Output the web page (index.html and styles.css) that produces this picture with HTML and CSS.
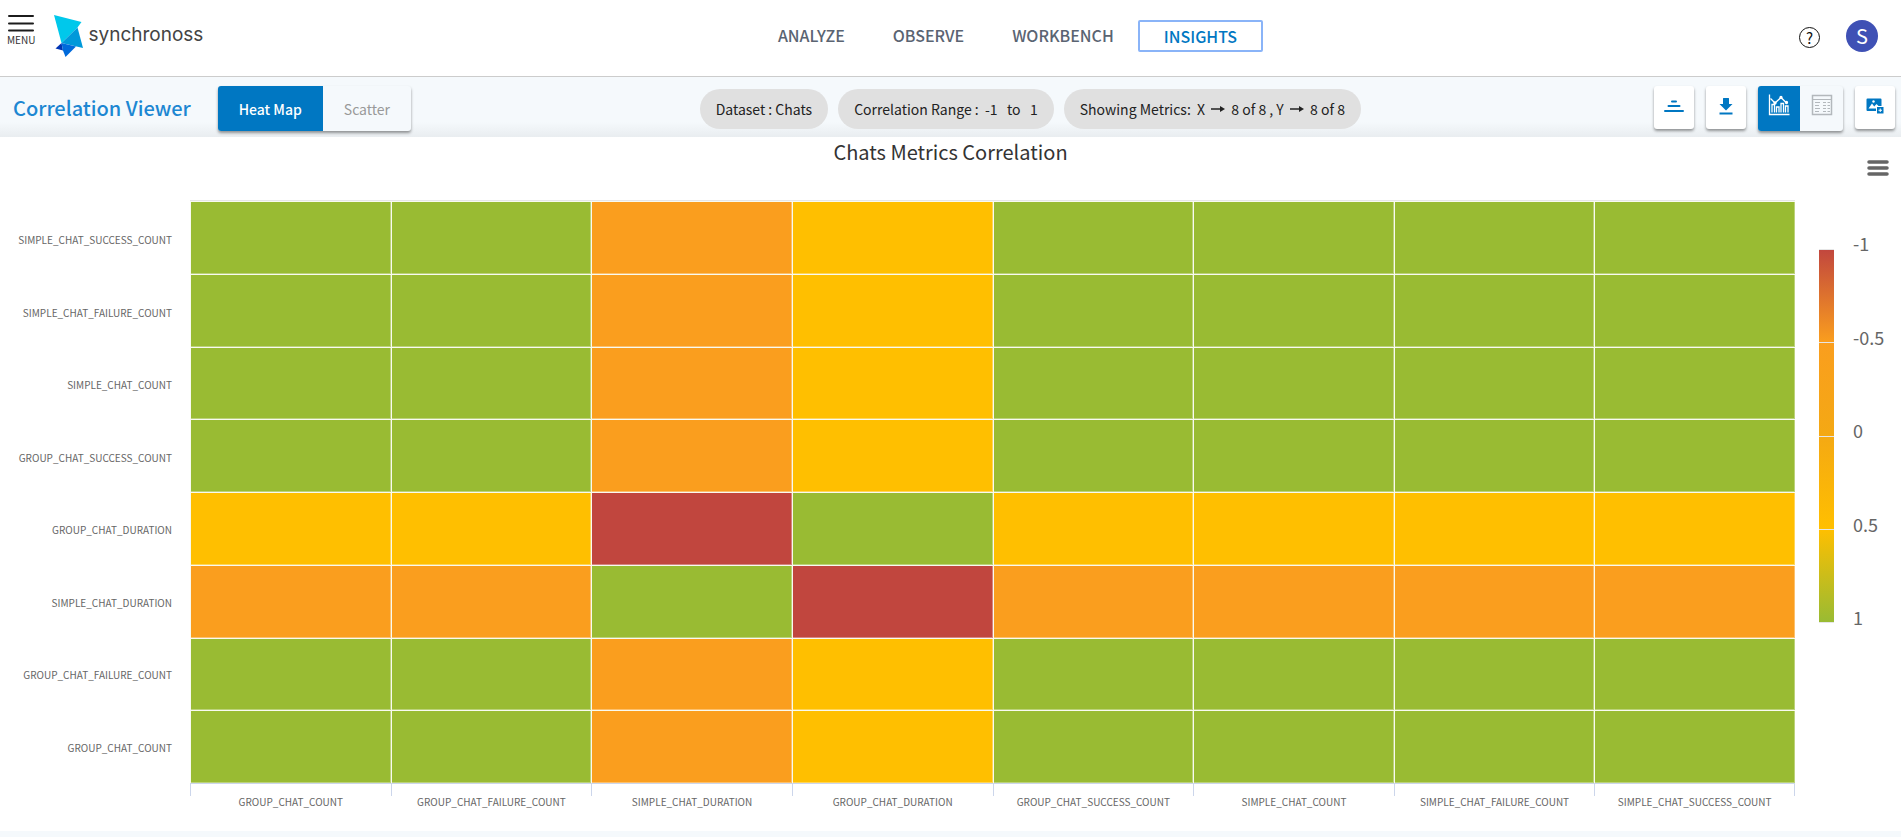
FILE: index.html
```html
<!DOCTYPE html>
<html lang="en">
<head>
<meta charset="utf-8">
<title>Correlation Viewer</title>
<link rel="stylesheet" href="styles.css">
</head>
<body>
<header class="topbar">
  <div class="brand">
    <button class="menu" type="button">
      <svg width="26" height="18" viewBox="0 0 26 18" aria-hidden="true"><path d="M1 2h24M1 9.500h24M1 16.500h24" stroke="#1c1c1c" stroke-width="2" stroke-linecap="round"/></svg>
      <span>MENU</span>
    </button>
    <a class="logo" href="#">
      <svg width="30" height="43" viewBox="0 0 30 43" aria-hidden="true">
        <path d="M0 0 27.500 7 23.500 12.500 7.500 28Z" fill="#00c8eb"/>
        <path d="M23.500 12.500 29 33 7.500 28Z" fill="#0099da"/>
        <path d="M7.500 28 1.500 33.500 9 35.500Z" fill="#0035b4"/>
        <path d="M7.500 28 22 31.500 11.500 42 9 35.500Z" fill="#006adb"/>
      </svg>
      <span class="logo-name">synchronoss</span>
    </a>
  </div>
  <nav class="nav">
    <a href="#">ANALYZE</a>
    <a href="#">OBSERVE</a>
    <a href="#">WORKBENCH</a>
    <a href="#" class="current">INSIGHTS</a>
  </nav>
  <div class="account">
    <button class="help" type="button" aria-label="Help">?</button>
    <button class="avatar" type="button">S</button>
  </div>
</header>

<section class="toolbar">
  <div class="toolbar-left">
    <h1>Correlation Viewer</h1>
    <div class="toggle">
      <button type="button" class="on">Heat Map</button>
      <button type="button">Scatter</button>
    </div>
  </div>
  <div class="chips">
    <span class="chip">Dataset : Chats</span>
    <span class="chip">Correlation Range :&nbsp; -1 &nbsp; to &nbsp; 1</span>
    <span class="chip">Showing Metrics:&nbsp; X <svg width="14" height="8" viewBox="0 0 14 8" role="img" aria-label="to"><path d="M0 4h10" stroke="#222" stroke-width="1.500"/><path d="M9 1 14 4 9 7Z" fill="#222"/></svg> 8 of 8 , Y <svg width="14" height="8" viewBox="0 0 14 8" role="img" aria-label="to"><path d="M0 4h10" stroke="#222" stroke-width="1.500"/><path d="M9 1 14 4 9 7Z" fill="#222"/></svg> 8 of 8</span>
  </div>
  <div class="tools">
    <button class="tool" type="button" aria-label="Sort"><svg width="20" height="14" viewBox="0 0 20 14"><path d="M8 2.500h4M4.500 7h11M1 12h18" stroke="#0077c2" stroke-width="2" stroke-linecap="round"/></svg></button>
    <button class="tool" type="button" aria-label="Download"><svg width="14" height="18" viewBox="0 0 14 18"><path d="M4 1.500Q4 1 4.500 1h5q.5 0 .5.5V7h3.500L7 13.500.5 7H4Z" fill="#0077c2"/><path d="M.5 16.500h13" stroke="#0077c2" stroke-width="2"/></svg></button>
    <div class="toggle view">
      <button type="button" class="on" aria-label="Chart view"><svg width="22" height="22" viewBox="0 0 22 22" fill="none" stroke="#fff" stroke-width="1.300"><path d="M1.500.5v20h20"/><path d="M2.500 4.500 7 9l6-5.500 5 5"/><path d="M4 18.500v-8h2.500v8M8.500 18.500V13H11v5.500M13 18.500v-9h2.500v9M17.500 18.500V12H20v6.500"/><circle cx="7" cy="9" r="1" fill="#fff"/><circle cx="13" cy="3.500" r="1" fill="#fff"/><circle cx="18.500" cy="8.500" r="1" fill="#fff"/></svg></button>
      <button type="button" aria-label="Table view"><svg width="22" height="22" viewBox="0 0 22 22" fill="none" stroke="#b3b8bc"><path d="M1.500 1.500h19v19h-19Z" stroke-width="1.500"/><path d="M1.500 5.500h19"/><path d="M4 8.500h5M4 11.500h4M4 14.500h5M4 17.500h4M12 8.500h3M12 11.500h3M12 14.500h3M12 17.500h3M16.500 8.500h2.500M16.500 11.500h2.500M16.500 14.500h2.500M16.500 17.500h2.500"/></svg></button>
    </div>
    <button class="tool" type="button" aria-label="Add to dashboard"><svg width="18" height="16" viewBox="0 0 18 16"><path d="M1.500.5h13q1 0 1 1V8H10v5H1.500q-1 0-1-1V1.500q0-1 1-1Z" fill="#0077c2"/><path d="M2.500 10.500 6 5.500l2.200 3L10.500 6l2 2H10v2.500Z" fill="#fff"/><circle cx="7.500" cy="3.500" r="1.200" fill="#fff"/><path d="M11 9h6.500v6.500H11Z" fill="#0077c2"/><path d="M14.250 10.500v3.500M12.500 12.250H16" stroke="#fff"/></svg></button>
  </div>
</section>

<main class="card">
  <h2>Chats Metrics Correlation</h2>
  <button class="chart-menu" type="button" aria-label="Chart menu"><svg width="22" height="18" viewBox="0 0 22 18"><path d="M2 3h18M2 9h18M2 15h18" stroke="#666" stroke-width="3.500" stroke-linecap="round"/></svg></button>
  <div class="chart">
    <div class="y-axis" id="y"></div>
    <div class="plot" id="plot"></div>
    <div class="x-axis" id="x"></div>
    <div class="legend">
      <div class="scale"><i></i><i></i><i></i><i></i></div>
      <div class="scale-labels"><span>-1</span><span>-0.5</span><span>0</span><span>0.5</span><span>1</span></div>
    </div>
  </div>
</main>
<script src="chart.js"></script>
</body>
</html>
```

FILE: styles.css
```css
* { box-sizing: border-box; }
body {
  margin: 0;
  min-height: 100vh;
  padding-bottom: 2px;
  display: flex;
  flex-direction: column;
  background: #fff;
  color: #333;
  font-family: "Noto Sans CJK SC", "Noto Sans", sans-serif;
}
h1, h2 { margin: 0; }
button { border: 0; padding: 0; background: none; font: inherit; color: inherit; }
a { color: inherit; text-decoration: none; }
svg { display: block; }

.topbar {
  height: 77px;
  flex: none;
  display: grid;
  grid-template-columns: 13fr auto 11fr;
  border-bottom: 1px solid #ccc;
}
.brand { display: flex; align-items: flex-start; padding: 14px 0 0 7px; gap: 19px; }
.menu { display: flex; flex-direction: column; align-items: center; font-size: 10px; line-height: 16px; }
.logo { display: flex; gap: 4px; padding-top: 1px; color: #444; }
.logo-name { font: 19px/40px Inter, sans-serif; }
.nav { display: flex; align-items: flex-start; padding-top: 20px; font-size: 16px; font-weight: 500; line-height: 30px; color: #5a6472; }
.nav a { padding: 0 24px; }
.nav .current { border: 2px solid #8ab4f8; border-radius: 2px; color: #0077c2; line-height: 28px; }
.account { display: flex; justify-content: flex-end; align-items: flex-start; gap: 26px; padding: 20px 23px 0 0; }
.help { width: 21px; height: 21px; margin-top: 7px; border: 1px solid #111; border-radius: 50%; font-size: 15px; line-height: 18px; color: #111; }
.avatar { width: 32px; height: 32px; border-radius: 50%; background: #3f51b5; color: #fff; font-size: 20px; line-height: 30px; }

.toolbar {
  height: 60px;
  flex: none;
  display: grid;
  grid-template-columns: 9fr auto 7fr;
  align-items: start;
  padding: 9px 6px 0 13px;
  background: linear-gradient(#f5f9fc 75%, #e9edf0);
}
.toolbar-left { display: flex; gap: 27px; }
h1 { font-size: 20px; font-weight: 500; line-height: 44px; color: #1d87d2; }
.toggle { display: flex; height: 45px; border-radius: 3px; overflow: hidden; box-shadow: 0 2px 3px rgba(0,0,0,.4); background: #f5f9fc; }
.toggle button { padding: 0 21px; font-size: 14px; color: #999; }
.toggle .on { background: #0077c2; color: #fff; font-weight: 500; }
.chips { display: flex; gap: 10px; padding-top: 3px; }
.chip { display: flex; align-items: center; gap: 3px; height: 40px; padding: 0 16px; border-radius: 20px; background: #e0e0e0; font-size: 14px; color: #222; white-space: pre; }
.tools { display: flex; justify-content: flex-end; gap: 12px; }
.tool { width: 40px; height: 43px; padding-bottom: 4px; display: grid; place-items: center; border-radius: 3px; background: #fff; box-shadow: 0 2px 3px rgba(0,0,0,.4); }
.view button { width: 43px; padding: 0 0 8px; display: grid; place-items: center; }
.view .on { width: 42px; }

.card {
  position: relative;
  flex: 1;
  display: flex;
  flex-direction: column;
  border-bottom: 6px solid #f5f9fc;
  border-radius: 4px 4px 0 0;
  background: #fff;
}
h2 { font-size: 20px; font-weight: 400; line-height: 30px; text-align: center; color: #333; }
.chart-menu { position: absolute; right: 12px; top: 22px; }
.chart {
  flex: 1;
  display: grid;
  grid-template-columns: 190px 1fr 106px;
  grid-template-rows: 1fr 47px;
  padding-top: 33px;
}
.y-axis { display: grid; grid-template-rows: repeat(8, 1fr); align-items: center; padding: 4px 18px 0 0; text-align: right; font-size: 10px; line-height: 14px; color: #666; }
.plot { display: grid; grid-template: repeat(8, 1fr) / repeat(8, 1fr); gap: 1px; padding: 1px 0 0 1px; background: #f8faf0; border-top: 1px solid #e6e6e6; border-bottom: 1px solid #ccd6eb; }
.plot div { border: solid rgba(255,255,255,.35); border-width: 0 1px 1px 0; background-clip: border-box; }
.good { background: #9b3; }
.mid { background: #ffbf00; }
.low { background: #fa9e1e; }
.bad { background: #c1463e; }
.x-axis { grid-column: 2; display: grid; grid-template-columns: repeat(8, 1fr); text-align: center; font-size: 10px; line-height: 14px; color: #666; }
.x-axis span { height: 12px; padding-top: 11px; border-left: 1px solid #ccd6eb; }
.x-axis span:last-child { border-right: 1px solid #ccd6eb; }
.legend { grid-column: 3; grid-row: 1; display: flex; gap: 19px; padding: 49px 0 0 24px; }
.scale { width: 15px; height: 374px; display: grid; grid-template-rows: repeat(4, 1fr); border-bottom: 1px solid #e6e6e6; background: linear-gradient(#c1463e, #fa9e1e 25%, #f4a814 49%, #ffbf00 75%, #9b3); }
.scale i { border-top: 1px solid #e6e6e6; }
.scale-labels { height: 394px; margin-top: -16px; display: flex; flex-direction: column; justify-content: space-between; font-size: 18px; line-height: 20px; color: #666; }
```

FILE: chart.js
```js
const metrics = [
  "GROUP_CHAT_COUNT", "GROUP_CHAT_FAILURE_COUNT", "SIMPLE_CHAT_DURATION", "GROUP_CHAT_DURATION",
  "GROUP_CHAT_SUCCESS_COUNT", "SIMPLE_CHAT_COUNT", "SIMPLE_CHAT_FAILURE_COUNT", "SIMPLE_CHAT_SUCCESS_COUNT"
];
const rows = [
  "SIMPLE_CHAT_SUCCESS_COUNT", "SIMPLE_CHAT_FAILURE_COUNT", "SIMPLE_CHAT_COUNT", "GROUP_CHAT_SUCCESS_COUNT",
  "GROUP_CHAT_DURATION", "SIMPLE_CHAT_DURATION", "GROUP_CHAT_FAILURE_COUNT", "GROUP_CHAT_COUNT"
];
const S = "SIMPLE_CHAT_DURATION", G = "GROUP_CHAT_DURATION";

function level(a, b) {
  if (a === b) return "good";
  const pair = [a, b];
  if (pair.includes(S) && pair.includes(G)) return "bad";
  if (pair.includes(S)) return "low";
  if (pair.includes(G)) return "mid";
  return "good";
}
function add(parent, tag, text, cls) {
  const el = document.createElement(tag);
  if (text) el.textContent = text;
  if (cls) el.className = cls;
  parent.append(el);
}
rows.forEach(r => {
  add(document.getElementById("y"), "span", r);
  metrics.forEach(m => add(document.getElementById("plot"), "div", "", level(r, m)));
});
metrics.forEach(m => add(document.getElementById("x"), "span", m));
```
